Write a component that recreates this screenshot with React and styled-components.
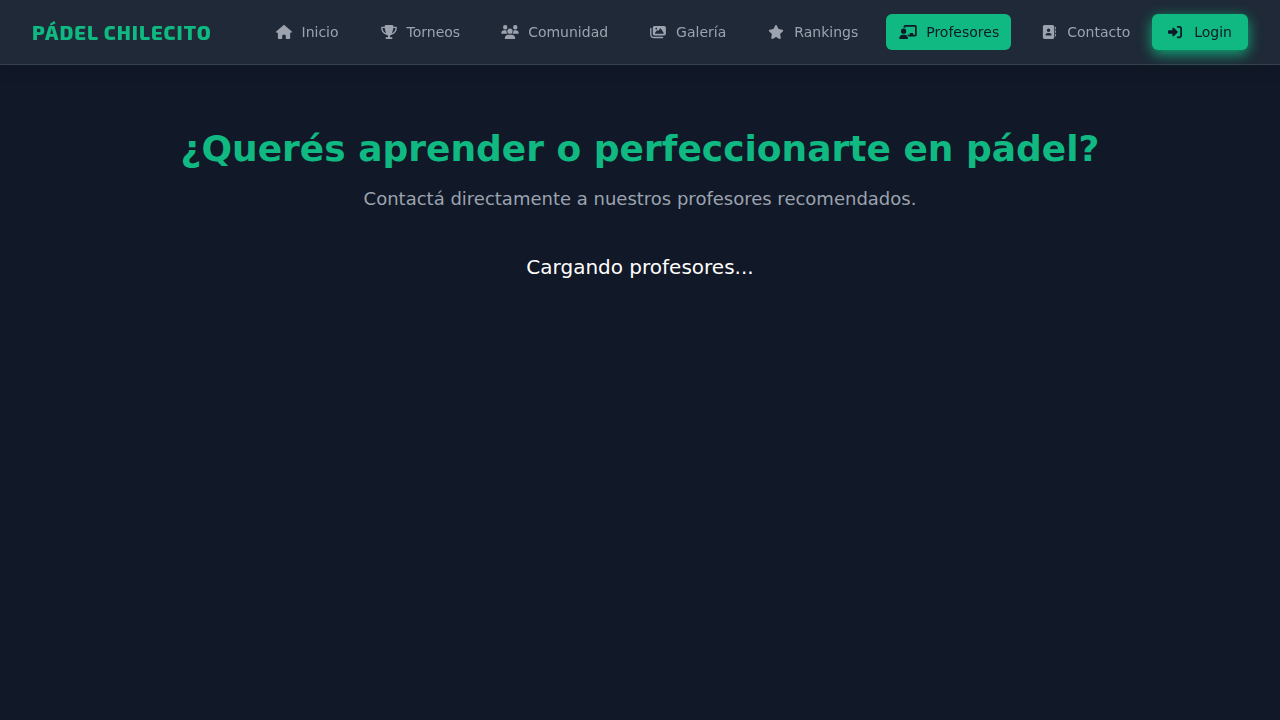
import React from "react";
import styled, { createGlobalStyle, css } from "styled-components";
import {
  FaHouse,
  FaTrophy,
  FaUsers,
  FaImages,
  FaStar,
  FaChalkboardUser,
  FaAddressBook,
  FaRightToBracket,
} from "react-icons/fa6";

const GlobalStyle = createGlobalStyle`
  *, *::before, *::after { box-sizing: border-box; }
  body {
    margin: 0;
    background: #111827;
    color: #ffffff;
    font-family: "DejaVu Sans", sans-serif;
    font-size: 16px;
    line-height: 24px;
  }
`;

const Header = styled.header`
  position: sticky;
  top: 0;
  display: flex;
  align-items: center;
  justify-content: space-between;
  height: 65px;
  padding: 0 32px;
  background: #1f2937;
  border-bottom: 1px solid #374151;
  box-shadow: 0 4px 16px rgba(0, 0, 0, 0.12);
  will-change: transform;
`;

const Brand = styled.a`
  color: #10b981;
  font-family: "Exo 2", Inter, sans-serif;
  font-size: 20px;
  font-weight: 800;
  letter-spacing: 1px;
  line-height: 28px;
  text-decoration: none;
  white-space: nowrap;
`;

const Actions = styled.div`
  display: flex;
  align-items: center;
  gap: 10px;
`;

const Nav = styled.nav`
  display: flex;
  align-items: center;
  gap: 16px;
`;

const pill = css`
  display: flex;
  align-items: center;
  height: 36px;
  border-radius: 6px;
  font-size: 14px;
  line-height: 20px;
  white-space: nowrap;
`;

const NavLink = styled.a`
  ${pill}
  gap: 8px;
  padding: 0 12px;
  text-decoration: none;
  color: ${({ $active }) => ($active ? "#111827" : "#9ca3af")};
  background: ${({ $active }) => ($active ? "#10b981" : "transparent")};

  svg {
    width: 20px;
    height: 14px;
  }
`;

const LoginButton = styled.button`
  ${pill}
  gap: 12px;
  padding: 0 16px;
  border: 0;
  font-family: inherit;
  color: #111827;
  background: #10b981;
  box-shadow: 0 4px 14px rgba(16, 185, 129, 0.9);
  cursor: pointer;
`;

const Main = styled.main`
  padding: 64px 32px;
  text-align: center;
`;

const Title = styled.h1`
  margin: 0 0 16px;
  color: #10b981;
  font-size: 36px;
  font-weight: 700;
  line-height: 40px;
`;

const Subtitle = styled.p`
  margin: 0 0 40px;
  color: #9ca3af;
  font-size: 18px;
  line-height: 28px;
`;

const Status = styled.p`
  margin: 0;
  font-size: 20px;
  line-height: 28px;
`;

const links = [
  { label: "Inicio", icon: FaHouse },
  { label: "Torneos", icon: FaTrophy },
  { label: "Comunidad", icon: FaUsers },
  { label: "Galería", icon: FaImages },
  { label: "Rankings", icon: FaStar },
  { label: "Profesores", icon: FaChalkboardUser, active: true },
  { label: "Contacto", icon: FaAddressBook },
];

export default function App() {
  return (
    <>
      <GlobalStyle />
      <Header>
        <Brand href="#">PÁDEL CHILECITO</Brand>
        <Actions>
          <Nav>
            {links.map(({ label, icon: Icon, active }) => (
              <NavLink
                key={label}
                href="#"
                $active={active}
                aria-current={active ? "page" : undefined}
              >
                <Icon aria-hidden="true" />
                {label}
              </NavLink>
            ))}
          </Nav>
          <LoginButton type="button">
            <FaRightToBracket aria-hidden="true" />
            Login
          </LoginButton>
        </Actions>
      </Header>
      <Main>
        <Title>¿Querés aprender o perfeccionarte en pádel?</Title>
        <Subtitle>Contactá directamente a nuestros profesores recomendados.</Subtitle>
        <Status role="status">Cargando profesores...</Status>
      </Main>
    </>
  );
}
